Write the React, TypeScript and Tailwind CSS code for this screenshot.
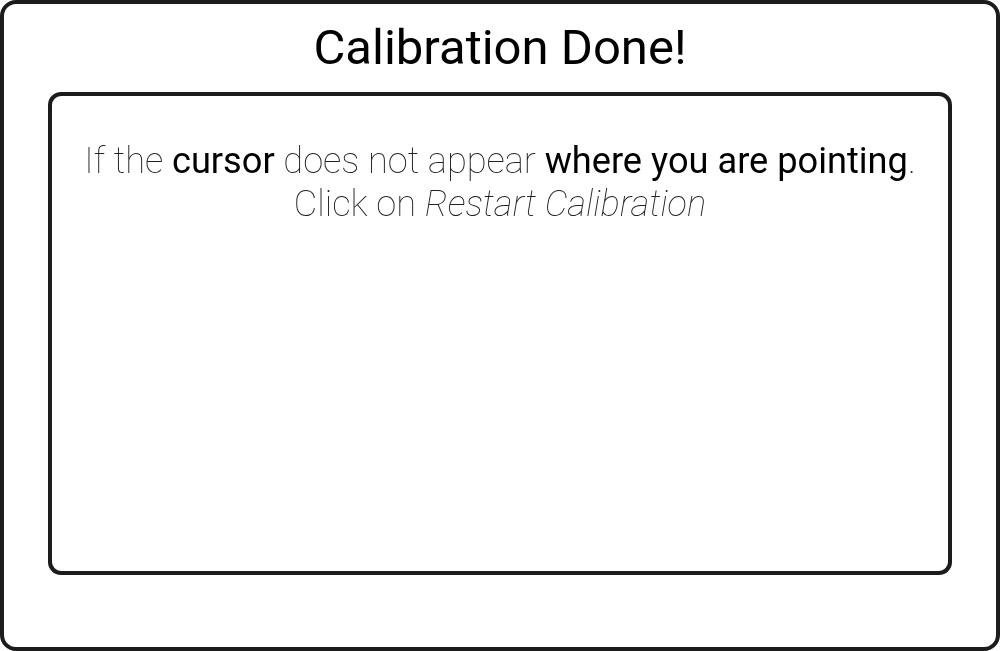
import React from 'react';

export default function App() {
  return (
    <div className="w-[1000px] h-[651px] bg-white" style={{ fontFamily: 'Roboto, "Liberation Sans", sans-serif' }}>
      <div className="h-full border-4 border-[#1c1c1c] rounded-[16px] flex flex-col items-center px-[44px]">
        <h1 className="text-[49px] leading-none font-normal text-black mt-[19px] mb-[20px]">Calibration Done!</h1>

        <div className="w-full h-[483px] shrink-0 border-4 border-[#1c1c1c] rounded-[13px] pt-[43px] text-center">
          <p className="text-[36.2px] leading-[43px] font-thin text-[#222] will-change-transform">
            If the <span className="font-normal text-black">cursor</span> does not appear{' '}
            <span className="font-normal text-black">where you are pointing</span>.
            <br />
            Click on <em>Restart Calibration</em>
          </p>
        </div>
      </div>
    </div>
  );
}
